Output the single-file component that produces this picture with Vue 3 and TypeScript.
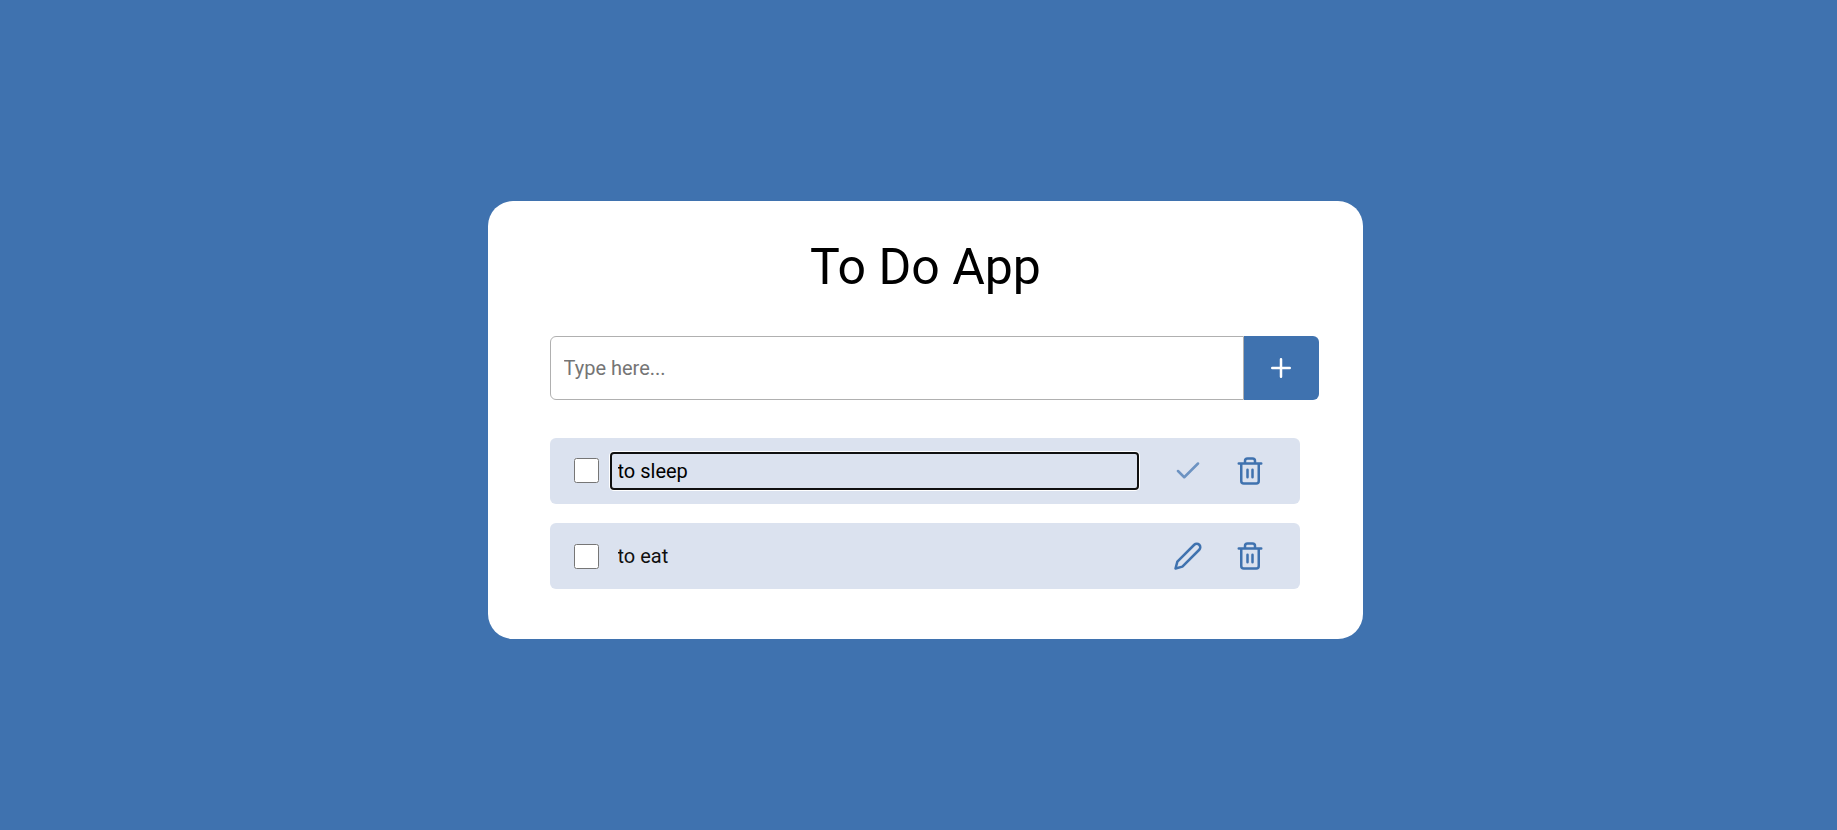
<script setup lang="ts">
import { ref } from 'vue'

interface Todo {
  id: number
  text: string
  done: boolean
}

const draft = ref('')
const editingId = ref<number | null>(1)
const todos = ref<Todo[]>([
  { id: 1, text: 'to sleep', done: false },
  { id: 2, text: 'to eat', done: false },
])

function add() {
  const text = draft.value.trim()
  if (!text) return
  todos.value.push({ id: Date.now(), text, done: false })
  draft.value = ''
}

function remove(id: number) {
  todos.value = todos.value.filter((t) => t.id !== id)
}
</script>

<template>
  <main class="page">
    <section class="card">
      <h1 class="title">To Do App</h1>
      <form class="add" @submit.prevent="add">
        <input v-model="draft" class="add-input" type="text" placeholder="Type here..." />
        <button class="add-button" type="submit" aria-label="Add">
          <svg class="icon" viewBox="0 0 24 24"><path d="M12 5v14M5 12h14" /></svg>
        </button>
      </form>
      <ul class="list">
        <li v-for="todo in todos" :key="todo.id" class="item">
          <input v-model="todo.done" class="check" type="checkbox" />
          <input
            v-model="todo.text"
            class="text"
            :class="{ editing: editingId === todo.id }"
            type="text"
            :readonly="editingId !== todo.id"
          />
          <button v-if="editingId === todo.id" class="action save" aria-label="Save" @click="editingId = null">
            <svg class="icon" viewBox="0 0 24 24"><path d="M20 6 9 17l-5-5" /></svg>
          </button>
          <button v-else class="action" aria-label="Edit" @click="editingId = todo.id">
            <svg class="icon" viewBox="0 0 24 24">
              <path d="M17 3a2.828 2.828 0 1 1 4 4L7.5 20.5 2 22l1.5-5.5L17 3z" />
            </svg>
          </button>
          <button class="action" aria-label="Delete" @click="remove(todo.id)">
            <svg class="icon" viewBox="0 0 24 24">
              <path d="M3 6h18M19 6v14a2 2 0 0 1-2 2H7a2 2 0 0 1-2-2V6M8 6V4a2 2 0 0 1 2-2h4a2 2 0 0 1 2 2v2M10 11v6M14 11v6" />
            </svg>
          </button>
        </li>
      </ul>
    </section>
  </main>
</template>

<style>
body {
  margin: 0;
  background: #3f72af;
}
</style>

<style scoped>
.page {
  box-sizing: border-box;
  min-height: 830px;
  padding: 201px 0 0 488px;
  font-family: Roboto, sans-serif;
  background: #3f72af;
}
.card {
  box-sizing: border-box;
  width: 875px;
  height: 438px;
  padding: 37px 44px 0 62px;
  border-radius: 25px;
  background: #fff;
}
.title {
  margin: 0 18px 39px 0;
  font-size: 50px;
  font-weight: 400;
  line-height: 59px;
  text-align: center;
  color: #000;
}
.add {
  display: flex;
  height: 64px;
}
.add-input {
  box-sizing: border-box;
  width: 694px;
  margin: 0;
  padding: 0 12.5px;
  border: 1px solid #b0b0b0;
  border-radius: 6px 0 0 6px;
  outline: none;
  font: 20px Roboto, sans-serif;
}
.add-input::placeholder {
  color: #757575;
}
.add-button {
  display: flex;
  align-items: center;
  justify-content: center;
  width: 75px;
  padding: 0 1px 0 0;
  border: 0;
  border-radius: 0 6px 6px 0;
  background: #3f72af;
  color: #fff;
}
.icon {
  display: block;
  width: 30px;
  height: 30px;
  fill: none;
  stroke: currentColor;
  stroke-width: 2;
  stroke-linecap: round;
  stroke-linejoin: round;
}
.list {
  display: flex;
  flex-direction: column;
  gap: 19.4px;
  width: 750px;
  margin: 37.7px 0 0;
  padding: 0;
  list-style: none;
}
.item {
  box-sizing: border-box;
  display: flex;
  align-items: center;
  height: 66px;
  padding: 0 35px 0 24px;
  border-radius: 6px;
  background: #dbe2ef;
}
.check {
  width: 25px;
  height: 25px;
  margin: 0 13px 0 0;
}
.text {
  box-sizing: border-box;
  width: 525px;
  height: 34px;
  margin: 0 36px 0 0;
  padding: 0 5.5px;
  border: 0;
  border-radius: 2px;
  outline: none;
  background: transparent;
  font: 20px Roboto, sans-serif;
  color: #101010;
}
.text.editing {
  box-shadow: 0 0 0 2px #101010, 0 0 0 3px #fff;
  color: #000;
}
.action {
  padding: 0;
  border: 0;
  background: none;
  color: #3f72af;
}
.action + .action {
  margin-left: 32px;
}
.save {
  opacity: 0.7;
}
</style>
